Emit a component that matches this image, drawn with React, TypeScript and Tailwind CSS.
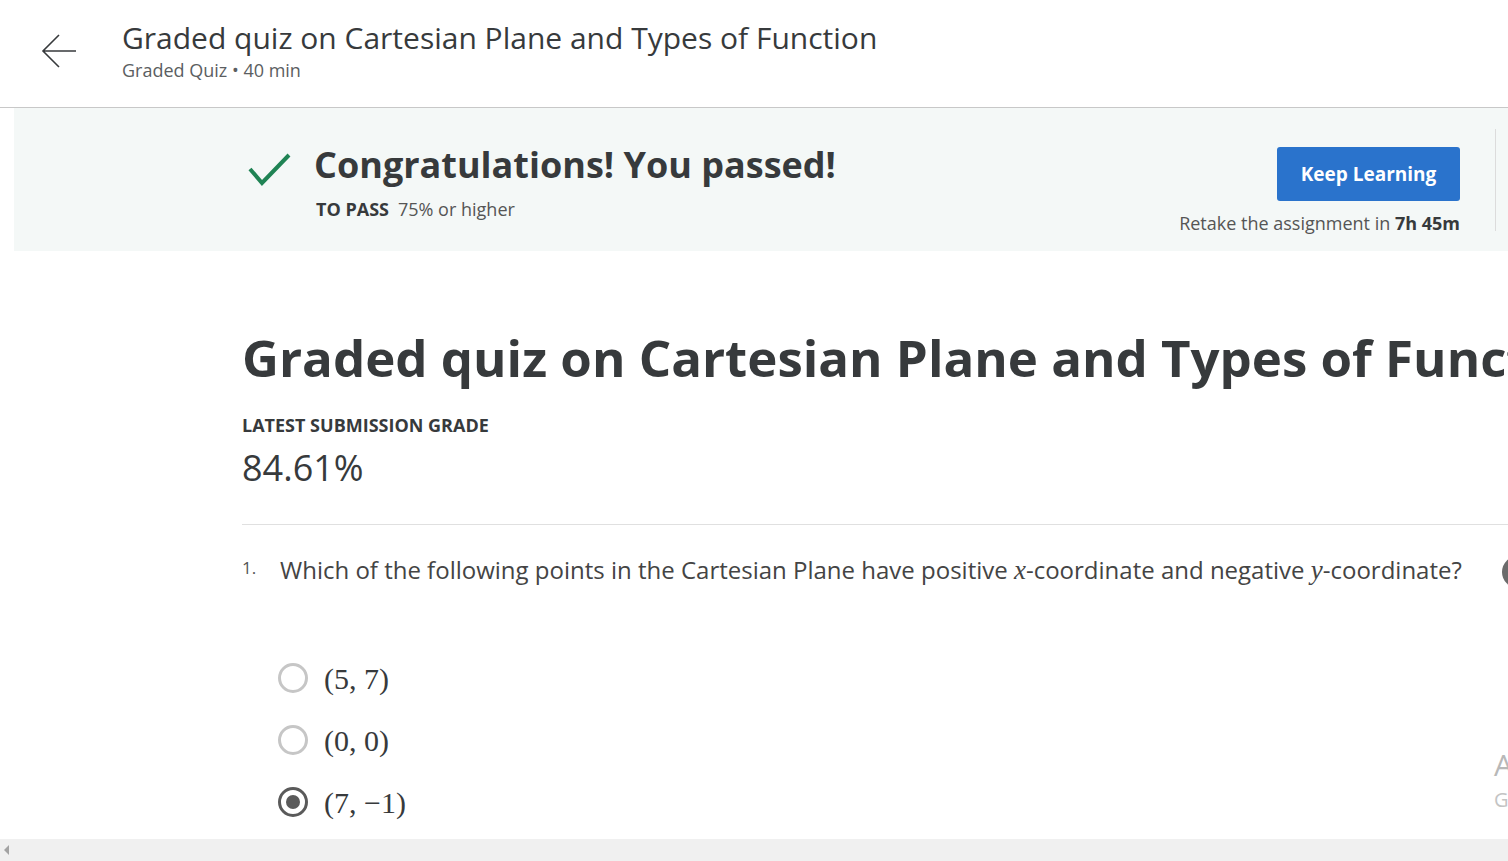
import { ReactNode } from "react";

const BackArrow = () => (
    <svg width="36" height="36" viewBox="0 0 36 36" fill="none">
        <path
            d="M35 18H2M18 2L2 18L18 34"
            stroke="#373a3c"
            strokeWidth="1.6"
        />
    </svg>
);

const CheckIcon = () => (
    <svg width="44" height="36" viewBox="0 0 44 36" fill="none">
        <path d="M2 17L14 31L41 3" stroke="#1f8354" strokeWidth="4" />
    </svg>
);

const Radio = ({ checked }: { checked?: boolean }) => (
    <span
        className={`flex h-[30px] w-[30px] items-center justify-center rounded-full border-[3px] ${
            checked ? "border-[#5a5a5a]" : "border-[#c6c6c6]"
        }`}
    >
        {checked && <span className="h-[14px] w-[14px] rounded-full bg-[#5a5a5a]" />}
    </span>
);

const Option = ({ checked, children }: { checked?: boolean; children: ReactNode }) => (
    <div className="flex h-[62px] items-center gap-[16px] pl-[278px]">
        <Radio checked={checked} />
        <span className="font-['Liberation_Serif',serif] text-[30px] text-[#373a3c]">
            {children}
        </span>
    </div>
);

const MathVar = ({ children }: { children: ReactNode }) => (
    <i className="font-['Liberation_Serif',serif] text-[27px]">{children}</i>
);

export default function App() {
    return (
        <div className="flex h-[861px] w-[1508px] flex-col overflow-hidden bg-white font-['Open_Sans',sans-serif] text-[#373a3c]">
            <div className="flex-1 overflow-hidden">
                <header className="flex h-[108px] items-start border-b border-[#c8c8c8] pt-[18px]">
                    <div className="ml-[41px] mt-[15px]">
                        <BackArrow />
                    </div>
                    <div className="ml-[45px]">
                        <h2 className="text-[30px] leading-[40px] whitespace-nowrap">
                            Graded quiz on Cartesian Plane and Types of Function
                        </h2>
                        <p className="text-[18px] leading-[24px] text-[#5b5e61]">
                            Graded Quiz • 40 min
                        </p>
                    </div>
                </header>

                <section className="ml-[14px] flex h-[143px] bg-[#f4f8f7]">
                    <div className="ml-[234px] flex flex-1 items-start pt-[39px]">
                        <div className="mt-[5px]">
                            <CheckIcon />
                        </div>
                        <div className="ml-[22px]">
                            <h1 className="text-[36px] font-bold leading-[36px] whitespace-nowrap">
                                Congratulations! You passed!
                            </h1>
                            <p className="mt-[14px] pl-[2px] text-[18px] leading-[24px]">
                                <span className="font-bold">TO PASS</span>
                                <span className="ml-[9px] text-[#555]">75% or higher</span>
                            </p>
                        </div>
                    </div>
                    <div className="flex flex-col items-end pt-[39px]">
                        <button className="h-[54px] w-[183px] rounded-[3px] bg-[#2a73cc] text-[19px] font-bold text-white">
                            Keep Learning
                        </button>
                        <p className="mt-[10px] text-[18px] leading-[24px] text-[#555] whitespace-nowrap">
                            Retake the assignment in{" "}
                            <span className="font-bold text-[#373a3c]">7h 45m</span>
                        </p>
                    </div>
                    <div className="ml-[35px] mt-[21px] h-[102px] w-px bg-[#dcdcdc]" />
                    <div className="w-[12px]" />
                </section>

                <main className="pl-[242px] pt-[74px]">
                    <h1 className="text-[51px] font-bold leading-[64px] whitespace-nowrap">
                        Graded quiz on Cartesian Plane and Types of Function
                    </h1>
                    <p className="mt-[24px] text-[18px] font-bold uppercase leading-[24px]">
                        Latest Submission Grade
                    </p>
                    <p className="mt-[9px] text-[36px] leading-[44px]">84.61%</p>
                    <div className="mt-[34px] h-px w-[2000px] bg-[#e0e0e0]" />
                </main>

                <div className="relative mt-[28px] flex items-start pl-[242px]">
                    <span className="mt-[3px] w-[38px] text-[17px] leading-[24px] text-[#555]">
                        1.
                    </span>
                    <p className="text-[24px] leading-[34px] whitespace-nowrap text-[#444]">
                        Which of the following points in the Cartesian Plane have positive{" "}
                        <MathVar>x</MathVar>-coordinate and negative <MathVar>y</MathVar>
                        -coordinate?
                    </p>
                    <span className="absolute left-[1502px] top-[3px] h-[32px] w-[32px] rounded-full bg-[#6b6b6b]" />
                </div>

                <div className="relative mt-[60px]">
                    <Option>(5, 7)</Option>
                    <Option>(0, 0)</Option>
                    <Option checked>(7, −1)</Option>
                    <div className="absolute left-[1494px] top-[100px] text-[30px] leading-[36px] text-[#b8b8b8]">
                        A
                    </div>
                    <div className="absolute left-[1494px] top-[140px] text-[20px] leading-[26px] text-[#c4c4c4]">
                        G
                    </div>
                </div>
            </div>

            <div className="flex h-[22px] items-center bg-[#f0f0f0] pl-[4px]">
                <svg width="6" height="10" viewBox="0 0 6 10">
                    <path d="M5 0L0 5L5 10Z" fill="#a3a3a3" />
                </svg>
            </div>
        </div>
    );
}
